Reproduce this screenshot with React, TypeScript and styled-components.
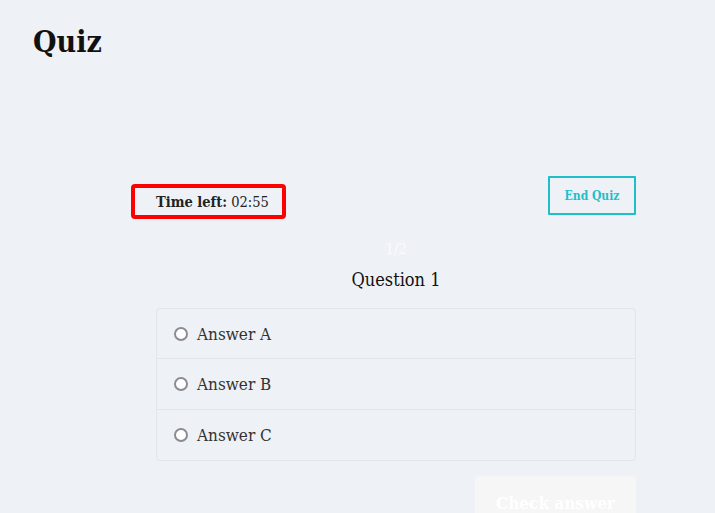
import React, { FC } from 'react';
import styled, { createGlobalStyle } from 'styled-components';

const GlobalStyle = createGlobalStyle`
  html, body {
    margin: 0;
    padding: 0;
    background: #eef1f6;
  }
  body {
    font-family: "DejaVu Serif Condensed", "DejaVu Serif", serif;
    color: #222;
  }
`;

const Page = styled.div`
  height: 513px;
  padding: 24px 0 0 33px;
  box-sizing: border-box;
  overflow: hidden;
`;

const Title = styled.h1`
  margin: 0;
  font-size: 30px;
  font-weight: 700;
  color: #111;
  line-height: 36px;
`;

const Quiz = styled.section`
  width: 480px;
  margin: 116px 0 0 123px;
  display: flex;
  flex-direction: column;
`;

const Header = styled.div`
  display: flex;
  justify-content: space-between;
  align-items: flex-start;
`;

const Timer = styled.div`
  margin: 8px 0 0 -25px;
  padding: 9px 17px 8px 25px;
  font-size: 14.5px;
  line-height: 18px;
  outline: 4px solid #ff0000;
  outline-offset: -4px;
  border-radius: 4px;
  b {
    font-weight: 700;
  }
`;

const EndButton = styled.button`
  width: 88px;
  height: 39px;
  border: 2px solid #1dbfca;
  background: transparent;
  color: #1dbfca;
  font-family: inherit;
  font-size: 12px;
  font-weight: 700;
  border-radius: 1px;
  cursor: pointer;
`;

const Progress = styled.div`
  text-align: center;
  color: #fafbfd;
  font-size: 15px;
  margin-top: 21px;
  line-height: 18px;
`;

const Question = styled.h2`
  margin: 11px 0 0;
  text-align: center;
  font-size: 18px;
  font-weight: 400;
  color: #111;
  line-height: 22px;
`;

const Answers = styled.ul`
  list-style: none;
  margin: 17px 0 0;
  padding: 0;
  border: 1px solid #e2e5ea;
  border-radius: 4px;
`;

const Answer = styled.li<{ $last?: boolean }>`
  box-sizing: border-box;
  height: ${p => (p.$last ? '50px' : '51px')};
  display: flex;
  align-items: center;
  gap: 9px;
  padding-left: 17px;
  font-size: 17px;
  color: #333;
  border-bottom: ${p => (p.$last ? 'none' : '1px solid #e2e5ea')};
  &:first-child {
    height: 50px;
  }
`;

const Radio = styled.span`
  width: 10px;
  height: 10px;
  border: 2px solid #8b8b95;
  border-radius: 50%;
  background: #fff;
  flex-shrink: 0;
`;

const Footer = styled.div`
  display: flex;
  justify-content: flex-end;
  margin-top: 15px;
`;

const CheckButton = styled.button`
  width: 161px;
  height: 54px;
  border: none;
  border-radius: 4px;
  background: #f6f6f6;
  color: #fff;
  font-family: inherit;
  font-size: 17px;
  font-weight: 700;
`;

const answers = ['Answer A', 'Answer B', 'Answer C'];

const App: FC = () => (
  <>
    <GlobalStyle />
    <Page>
      <Title>Quiz</Title>
      <Quiz>
        <Header>
          <Timer>
            <b>Time left:</b> 02:55
          </Timer>
          <EndButton>End Quiz</EndButton>
        </Header>
        <Progress>1/2</Progress>
        <Question>Question 1</Question>
        <Answers>
          {answers.map((a, i) => (
            <Answer key={a} $last={i === answers.length - 1}>
              <Radio />
              {a}
            </Answer>
          ))}
        </Answers>
        <Footer>
          <CheckButton>Check answer</CheckButton>
        </Footer>
      </Quiz>
    </Page>
  </>
);

export default App;
